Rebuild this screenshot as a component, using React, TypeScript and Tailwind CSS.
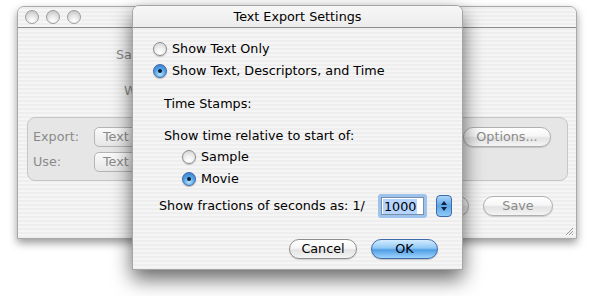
const stripes =
  "bg-[repeating-linear-gradient(180deg,#eeeeee_0px,#eeeeee_2px,#f5f5f5_2px,#f5f5f5_4px)]";

function Radio({ checked }: { checked?: boolean }) {
  if (checked) {
    return (
      <span className="relative flex h-[14px] w-[14px] shrink-0 items-center justify-center rounded-full border border-[#3d6aa8] bg-[radial-gradient(circle_at_50%_75%,#b9e4ff_0%,#5aa7e8_45%,#2f74c8_100%)] shadow-[0_1px_1px_rgba(0,0,0,0.25)]">
        <span className="h-[4px] w-[4px] rounded-full bg-[#0d1d33]" />
      </span>
    );
  }
  return (
    <span className="h-[14px] w-[14px] shrink-0 rounded-full border border-[#8a8a8a] bg-[radial-gradient(circle_at_50%_80%,#ffffff_0%,#f1f1f1_40%,#cfcfcf_100%)] shadow-[0_1px_1px_rgba(0,0,0,0.2)]" />
  );
}

function Light() {
  return (
    <span className="h-[14px] w-[14px] rounded-full border border-[#9c9c9c] bg-[radial-gradient(circle_at_50%_80%,#ffffff_0%,#e6e6e6_45%,#bdbdbd_100%)]" />
  );
}

function AquaButton({ label, w, dim }: { label: string; w: string; dim?: boolean }) {
  return (
    <div
      className={`flex h-[20px] ${w} items-center justify-center rounded-full border border-[#8e8e8e] bg-[linear-gradient(180deg,#ffffff_0%,#f6f6f6_45%,#e3e3e3_55%,#f4f4f4_100%)] shadow-[0_1px_1px_rgba(0,0,0,0.15)] ${
        dim ? "text-[#8a8a8a] border-[#b0b0b0]" : "text-black"
      }`}
    >
      {label}
    </div>
  );
}

function Popup({ label }: { label: string }) {
  return (
    <div className="flex h-[20px] w-[120px] items-center rounded-[5px] border border-[#b5b5b5] bg-[linear-gradient(180deg,#fafafa_0%,#f1f1f1_50%,#e6e6e6_100%)] pl-[8px] text-[#8a8a8a]">
      {label}
    </div>
  );
}

export default function App() {
  return (
    <div className="relative h-[296px] w-[594px] overflow-hidden bg-white font-['DejaVu_Sans',sans-serif] text-[12.75px] text-black">
      {/* BACK WINDOW */}
      <div className="ml-[17px] mt-[6px] flex h-[233px] w-[560px] flex-col overflow-hidden rounded-t-[7px] border border-[#a9a9a9] bg-[#f2f2f2] shadow-[0_4px_9px_rgba(0,0,0,0.4)]">
        <div className={`flex h-[21px] shrink-0 items-center gap-[7px] border-b border-[#8c8c8c] pl-[7px] ${stripes}`}>
          <Light />
          <Light />
          <Light />
        </div>
        <div className={`flex flex-1 flex-col ${stripes}`}>
          <div className="mt-[20px] flex flex-col gap-[22px] pl-[98px] text-[#8a8a8a]">
            <div className="h-[14px] leading-[14px]">Save As:</div>
            <div className="h-[14px] pl-[8px] leading-[14px]">Where:</div>
          </div>
          {/* group box */}
          <div className="ml-[9px] mt-[19px] flex h-[64px] w-[541px] rounded-[8px] border border-[#c6c6c6] bg-[#e6e6e6] px-[5px] pt-[9px] text-[#8a8a8a]">
            <div className="flex flex-col gap-[5px]">
              <div className="flex h-[20px] items-center gap-[13px]">
                <span className="w-[48px]">Export:</span>
                <Popup label="Text" />
              </div>
              <div className="flex h-[20px] items-center gap-[13px]">
                <span className="w-[48px]">Use:</span>
                <Popup label="Text" />
              </div>
            </div>
            <div className="ml-auto mr-[11px]">
              <AquaButton label="Options..." w="w-[88px]" dim />
            </div>
          </div>
          <div className="mr-[23px] mt-[15px] flex justify-end gap-[14px]">
            <AquaButton label="Cancel" w="w-[70px]" dim />
            <AquaButton label="Save" w="w-[70px]" dim />
          </div>
          <div className="mr-[2px] mt-auto mb-[2px] flex justify-end">
            <svg width="10" height="10" viewBox="0 0 10 10">
              <path d="M9 2 L2 9 M9 5 L5 9 M9 8 L8 9" stroke="#9a9a9a" strokeWidth="1" />
            </svg>
          </div>
        </div>
      </div>

      {/* DIALOG (sheet over the window) */}
      <div className="absolute left-[132px] top-[5px] flex h-[265px] w-[331px] flex-col overflow-hidden rounded-t-[7px] border border-[#a5a5a5] bg-[#f0f0f0] shadow-[0_9px_20px_rgba(0,0,0,0.6)]">
        <div className="flex h-[22px] shrink-0 items-center justify-center border-b border-[#8d8d8d] bg-[linear-gradient(180deg,#f7f7f7_0%,#ececec_100%)]">
          Text Export Settings
        </div>
        <div className={`flex flex-1 flex-col ${stripes}`}>
          <div className="ml-[20px] mt-[10px] flex h-[22px] items-center gap-[5px]">
            <Radio />
            <span>Show Text Only</span>
          </div>
          <div className="ml-[20px] flex h-[22px] items-center gap-[5px]">
            <Radio checked />
            <span>Show Text, Descriptors, and Time</span>
          </div>
          <div className="ml-[31px] mt-[12px] flex h-[20px] items-center">Time Stamps:</div>
          <div className="ml-[31px] mt-[12px] flex h-[20px] items-center">
            Show time relative to start of:
          </div>
          <div className="ml-[49px] flex h-[22px] items-center gap-[5px]">
            <Radio />
            <span>Sample</span>
          </div>
          <div className="ml-[49px] flex h-[22px] items-center gap-[5px]">
            <Radio checked />
            <span>Movie</span>
          </div>
          <div className="ml-[26px] mt-[3px] flex h-[26px] items-center">
            <span>Show fractions of seconds as: 1/</span>
            <div className="ml-auto flex h-[24px] w-[49px] items-center rounded-[3px] bg-[#9cc3ee] p-[3px]">
              <div className="flex h-full w-full items-center border border-[#7b8ea8] bg-white pl-[1px]">
                <span className="bg-[#b5d5ff] px-[1px] leading-[15px]">1000</span>
              </div>
            </div>
            <div className="ml-[9px] mr-[10px] flex h-[22px] w-[16px] flex-col items-center justify-center gap-[2px] rounded-[4px] border border-[#3d6aa8] bg-[linear-gradient(180deg,#a9d6fb_0%,#5ea6e6_50%,#8ccaf8_100%)]">
              <svg width="6" height="4" viewBox="0 0 6 4">
                <path d="M3 0 L6 4 L0 4 Z" fill="#10233f" />
              </svg>
              <svg width="6" height="4" viewBox="0 0 6 4">
                <path d="M0 0 L6 0 L3 4 Z" fill="#10233f" />
              </svg>
            </div>
          </div>
          <div className="mt-[20px] flex gap-[14px] pl-[156px]">
            <AquaButton label="Cancel" w="w-[68px]" />
            <div className="flex h-[20px] w-[67px] items-center justify-center rounded-full border border-[#3f6ba8] bg-[linear-gradient(180deg,#d3ecff_0%,#8fc8f5_45%,#4f9de4_55%,#9fd5ff_100%)] shadow-[0_1px_1px_rgba(0,0,0,0.2)]">
              OK
            </div>
          </div>
        </div>
      </div>
    </div>
  );
}
